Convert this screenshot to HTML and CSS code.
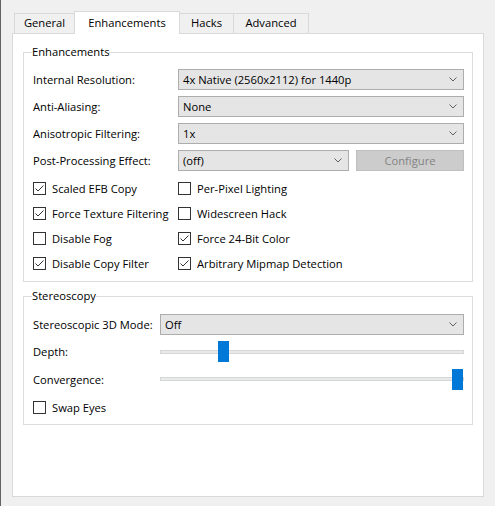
FILE: index.html
```html
<!DOCTYPE html>
<html>
<head>
<meta charset="utf-8">
<link rel="stylesheet" href="styles.css">
</head>
<body>
<div class="tabs">
  <div class="tab tab-general">General</div>
  <div class="tab tab-active tab-enh">Enhancements</div>
  <div class="tab tab-hacks">Hacks</div>
  <div class="tab tab-adv">Advanced</div>
</div>
<div class="pane">
  <fieldset class="group group-enh">
    <legend>Enhancements</legend>
    <div class="form form-enh">
      <div class="label">Internal Resolution:</div>
      <div class="combo"><span>4x Native (2560x2112) for 1440p</span><svg class="arrow" width="8" height="5" viewBox="0 0 8 5"><polyline points="0.5,0.5 4,4 7.5,0.5" fill="none" stroke="#606060" stroke-width="1"/></svg></div>
      <div class="label">Anti-Aliasing:</div>
      <div class="combo"><span>None</span><svg class="arrow" width="8" height="5" viewBox="0 0 8 5"><polyline points="0.5,0.5 4,4 7.5,0.5" fill="none" stroke="#606060" stroke-width="1"/></svg></div>
      <div class="label">Anisotropic Filtering:</div>
      <div class="combo"><span>1x</span><svg class="arrow" width="8" height="5" viewBox="0 0 8 5"><polyline points="0.5,0.5 4,4 7.5,0.5" fill="none" stroke="#606060" stroke-width="1"/></svg></div>
      <div class="label">Post-Processing Effect:</div>
      <div class="pp-row">
        <div class="combo combo-pp"><span>(off)</span><svg class="arrow" width="8" height="5" viewBox="0 0 8 5"><polyline points="0.5,0.5 4,4 7.5,0.5" fill="none" stroke="#606060" stroke-width="1"/></svg></div>
        <div class="button button-disabled">Configure</div>
      </div>
    </div>
    <div class="checks checks-enh">
      <div class="check"><span class="box"><svg width="11" height="11" viewBox="0 0 11 11"><polyline points="1.5,5.5 4,8 9.5,2.5" fill="none" stroke="#333" stroke-width="1"/></svg></span>Scaled EFB Copy</div>
      <div class="check"><span class="box"></span>Per-Pixel Lighting</div>
      <div class="check"><span class="box"><svg width="11" height="11" viewBox="0 0 11 11"><polyline points="1.5,5.5 4,8 9.5,2.5" fill="none" stroke="#333" stroke-width="1"/></svg></span>Force Texture Filtering</div>
      <div class="check"><span class="box"></span>Widescreen Hack</div>
      <div class="check"><span class="box"></span>Disable Fog</div>
      <div class="check"><span class="box"><svg width="11" height="11" viewBox="0 0 11 11"><polyline points="1.5,5.5 4,8 9.5,2.5" fill="none" stroke="#333" stroke-width="1"/></svg></span>Force 24-Bit Color</div>
      <div class="check"><span class="box"><svg width="11" height="11" viewBox="0 0 11 11"><polyline points="1.5,5.5 4,8 9.5,2.5" fill="none" stroke="#333" stroke-width="1"/></svg></span>Disable Copy Filter</div>
      <div class="check"><span class="box"><svg width="11" height="11" viewBox="0 0 11 11"><polyline points="1.5,5.5 4,8 9.5,2.5" fill="none" stroke="#333" stroke-width="1"/></svg></span>Arbitrary Mipmap Detection</div>
    </div>
  </fieldset>
  <fieldset class="group group-stereo">
    <legend>Stereoscopy</legend>
    <div class="form form-stereo">
      <div class="label">Stereoscopic 3D Mode:</div>
      <div class="combo"><span>Off</span><svg class="arrow" width="8" height="5" viewBox="0 0 8 5"><polyline points="0.5,0.5 4,4 7.5,0.5" fill="none" stroke="#606060" stroke-width="1"/></svg></div>
      <div class="label">Depth:</div>
      <div class="slider"><div class="track"></div><div class="thumb" style="left: 19%"></div></div>
      <div class="label">Convergence:</div>
      <div class="slider"><div class="track"></div><div class="thumb" style="left: calc(100% - 12px)"></div></div>
      <div class="check check-span"><span class="box"></span>Swap Eyes</div>
    </div>
  </fieldset>
</div>
</body>
</html>
```
FILE: styles.css
```css
* { box-sizing: border-box; }
html, body { margin: 0; padding: 0; }
body {
  width: 495px;
  height: 506px;
  background: #f0f0f0;
  border-left: 1px solid #646464;
  font-family: "Open Sans", "Liberation Sans", sans-serif;
  font-size: 11.2px;
  color: #000;
  overflow: hidden;
}
.tabs {
  display: flex;
  align-items: flex-end;
  height: 33px;
  padding-left: 13px;
}
.tab {
  height: 20px;
  line-height: 18px;
  text-align: center;
  background: #f0f0f0;
  border: 1px solid #d9d9d9;
  border-bottom: none;
  margin-left: -1px;
}
.tab:first-child { margin-left: 0; }
.tab-general { width: 61px; }
.tab-enh { width: 106px; }
.tab-hacks { width: 55px; }
.tab-adv { width: 76px; }
.tab-active {
  position: relative;
  z-index: 1;
  height: 23px;
  line-height: 21px;
  margin-bottom: -1px;
  background: #fff;
}
.pane {
  margin-left: 11px;
  width: 472px;
  height: 464px;
  background: #fff;
  border: 1px solid #d9d9d9;
  padding: 10px 10px 0 10px;
}
.group {
  margin: 0;
  min-width: 0;
  border: 1px solid #dcdcdc;
  padding: 9px 8px 5px 9px;
}
.group legend {
  padding: 0;
  margin-left: -1px;
  line-height: 16px;
}
.group-stereo {
  margin-top: 6px;
  padding-top: 10px;
  padding-bottom: 6px;
}
.form {
  display: grid;
  row-gap: 6px;
  align-items: center;
}
.form-enh {
  grid-template-columns: 145px 1fr;
  grid-auto-rows: 21px;
}
.form-stereo {
  grid-template-columns: 127px 1fr;
  grid-template-rows: 21px 21px 22px 22px;
}
.label { white-space: nowrap; }
.combo {
  height: 21px;
  background: #e5e5e5;
  border: 1px solid #adadad;
  display: flex;
  align-items: center;
  justify-content: space-between;
  padding: 0 6px 0 4px;
  white-space: nowrap;
}
.arrow { display: block; }
.pp-row {
  display: flex;
  gap: 7px;
}
.combo-pp { width: 171px; }
.button {
  flex: 1;
  height: 21px;
  border: 1px solid #bfbfbf;
  background: #cccccc;
  color: #838383;
  display: flex;
  align-items: center;
  justify-content: center;
}
.checks {
  display: grid;
  grid-template-columns: 145px 1fr;
  grid-auto-rows: 25px;
  margin-top: 5px;
  align-items: center;
}
.check {
  display: flex;
  align-items: center;
  gap: 6px;
  white-space: nowrap;
}
.check-span { grid-column: 1 / span 2; }
.box {
  width: 13px;
  height: 13px;
  border: 1px solid #333;
  background: #fff;
  display: flex;
  flex: none;
}
.box svg { display: block; }
.slider {
  position: relative;
  height: 21px;
  display: flex;
  align-items: center;
}
.track {
  width: 100%;
  height: 4px;
  background: #e7eaea;
  border: 1px solid #d6d6d6;
}
.thumb {
  position: absolute;
  top: 0;
  width: 11px;
  height: 21px;
  background: #0078d7;
}
```
